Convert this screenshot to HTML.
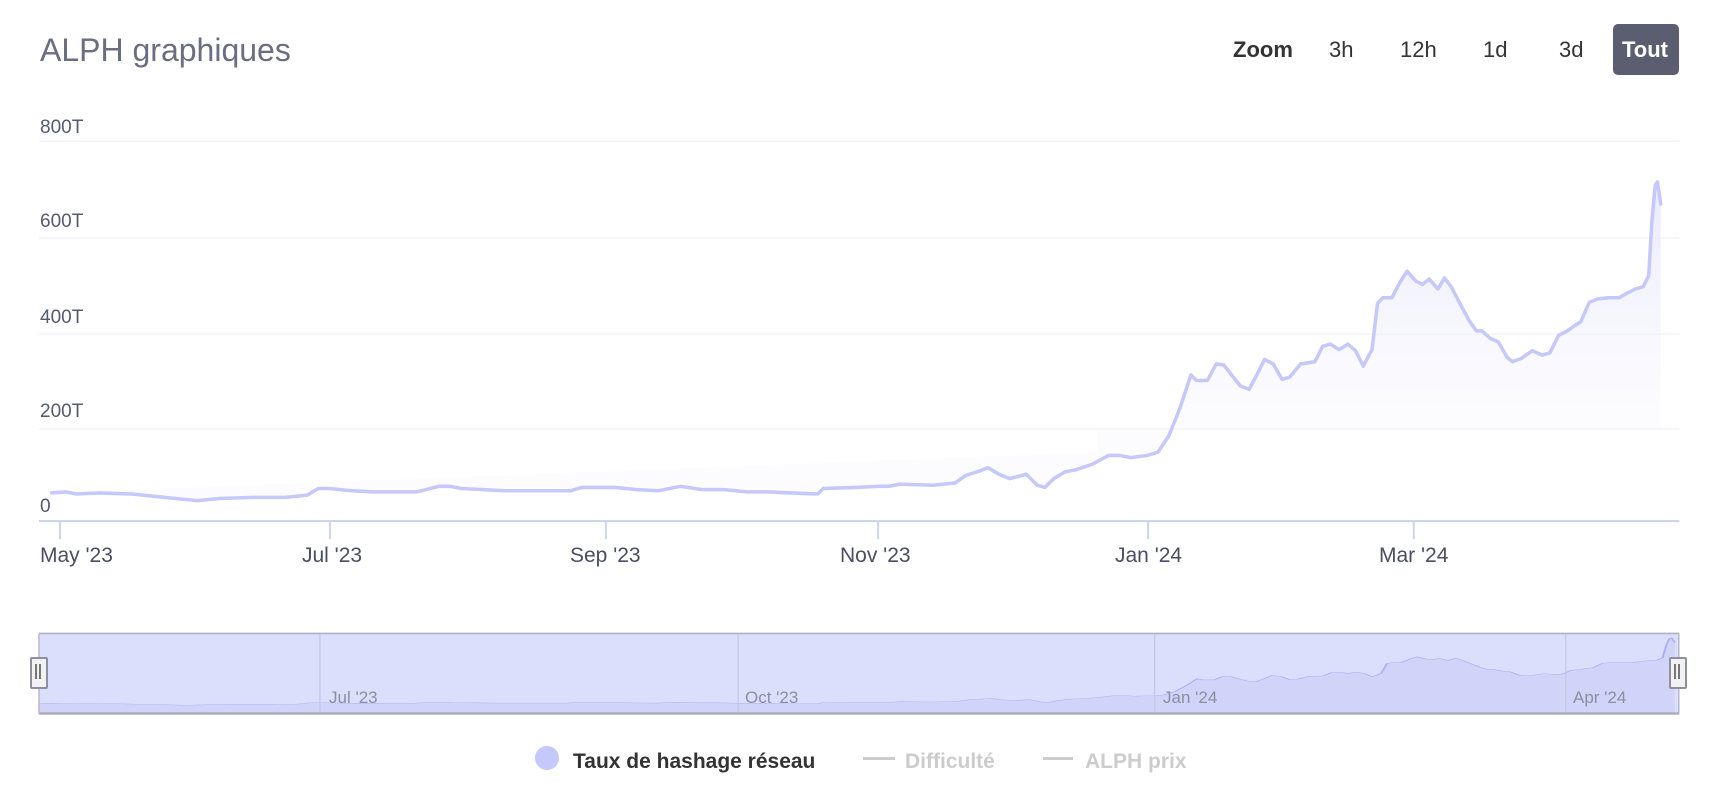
<!DOCTYPE html>
<html><head><meta charset="utf-8"><style>
html,body{margin:0;padding:0;background:#fff;width:1720px;height:794px;overflow:hidden;font-family:"Liberation Sans",sans-serif;}
.t{position:absolute;white-space:nowrap;line-height:1;}
.yl{font-size:19px;color:#555a6e;left:40px;}
.xl{font-size:21px;color:#4a4e60;top:545px;}
.nl{font-size:17px;color:#8b8fa0;top:689px;}
</style></head><body>
<svg width="1720" height="794" viewBox="0 0 1567 720" preserveAspectRatio="none" style="position:absolute;left:0;top:0">
<defs>
<linearGradient id="g" x1="0" y1="0" x2="0" y2="1" gradientUnits="userSpaceOnUse" x1a="0"><stop offset="0" stop-color="#c5c8fb" stop-opacity="0.35"/><stop offset="1" stop-color="#c5c8fb" stop-opacity="0"/></linearGradient>
<linearGradient id="g2" x1="0" y1="160" x2="0" y2="390" gradientUnits="userSpaceOnUse"><stop offset="0" stop-color="#e6e7fb" stop-opacity="0.9"/><stop offset="1" stop-color="#f3f3fc" stop-opacity="0.2"/></linearGradient>
</defs>
<g stroke="#f2f2f8" stroke-width="1.2">
<line x1="35.5" y1="128" x2="1530" y2="128"/><line x1="35.5" y1="216" x2="1530" y2="216"/><line x1="35.5" y1="303" x2="1530" y2="303"/><line x1="35.5" y1="389" x2="1530" y2="389"/>
</g>
<line x1="35.5" y1="472.5" x2="1530" y2="472.5" stroke="#ccd6eb" stroke-width="2"/>
<g stroke="#ccd6eb" stroke-width="1.8">
<line x1="54.7" y1="473" x2="54.7" y2="489"/><line x1="300.6" y1="473" x2="300.6" y2="489"/><line x1="552" y1="473" x2="552" y2="489"/><line x1="800" y1="473" x2="800" y2="489"/><line x1="1046" y1="473" x2="1046" y2="489"/><line x1="1288" y1="473" x2="1288" y2="489"/>
</g>
<path id="p" d="M47 447 L60 446 L70 448 L90 447 L120 448 L140 450 L160 452 L180 454 L200 452 L230 451 L260 451 L280 449 L290 443 L300 443 L320 445 L340 446 L380 446 L400 441 L410 441 L420 443 L440 444 L460 445 L520 445 L530 442 L560 442 L580 444 L600 445 L620 441 L640 444 L660 444 L680 446 L700 446 L720 447 L745 448 L750 443 L780 442 L800 441 L810 441 L820 439 L850 440 L870 438 L880 431 L890 428 L900 424 L910 430 L920 434 L935 430 L945 440 L952 442 L960 434 L970 428 L980 426 L995 421 L1010 413 L1020 413 L1030 415 L1045 413 L1055 410 L1065 395 L1075 370 L1085 340 L1090 345 L1100 345 L1108 330 L1115 331 L1122 340 L1130 350 L1138 353 L1145 340 L1152 326 L1160 330 L1168 344 L1175 342 L1185 330 L1198 328 L1205 314 L1212 312 L1220 317 L1228 312 L1235 318 L1242 332 L1250 317 L1255 275 L1260 270 L1268 270 L1276 255 L1282 246 L1290 255 L1296 258 L1302 253 L1310 262 L1316 252 L1322 260 L1330 275 L1338 290 L1345 300 L1350 300 L1358 307 L1365 310 L1373 324 L1378 328 L1386 325 L1396 318 L1405 322 L1412 320 L1420 304 L1428 300 L1435 295 L1440 292 L1448 274 L1456 271 L1465 270 L1475 270 L1482 266 L1490 262 L1497 260 L1502 250 L1505 200 L1508 168 L1510 165 L1513 185" fill="none"/>
<path d="M47 447 L60 446 L70 448 L90 447 L120 448 L140 450 L160 452 L180 454 L200 452 L230 451 L260 451 L280 449 L290 443 L300 443 L320 445 L340 446 L380 446 L400 441 L410 441 L420 443 L440 444 L460 445 L520 445 L530 442 L560 442 L580 444 L600 445 L620 441 L640 444 L660 444 L680 446 L700 446 L720 447 L745 448 L750 443 L780 442 L800 441 L810 441 L820 439 L850 440 L870 438 L880 431 L890 428 L900 424 L910 430 L920 434 L935 430 L945 440 L952 442 L960 434 L970 428 L980 426 L995 421 L1010 413 L1020 413 L1030 415 L1045 413 L1055 410 L1065 395 L1075 370 L1085 340 L1090 345 L1100 345 L1108 330 L1115 331 L1122 340 L1130 350 L1138 353 L1145 340 L1152 326 L1160 330 L1168 344 L1175 342 L1185 330 L1198 328 L1205 314 L1212 312 L1220 317 L1228 312 L1235 318 L1242 332 L1250 317 L1255 275 L1260 270 L1268 270 L1276 255 L1282 246 L1290 255 L1296 258 L1302 253 L1310 262 L1316 252 L1322 260 L1330 275 L1338 290 L1345 300 L1350 300 L1358 307 L1365 310 L1373 324 L1378 328 L1386 325 L1396 318 L1405 322 L1412 320 L1420 304 L1428 300 L1435 295 L1440 292 L1448 274 L1456 271 L1465 270 L1475 270 L1482 266 L1490 262 L1497 260 L1502 250 L1505 200 L1508 168 L1510 165 L1513 185 L1513 390 L1000 390 L1000 410 Z" fill="url(#g2)"/>
<use href="#p" stroke="#c5c8fb" stroke-width="3.2" stroke-linejoin="round" stroke-linecap="round"/>
<!-- navigator -->
<rect x="35.5" y="575" width="1494" height="72" fill="#dcdffc"/>
<g transform="matrix(1.017 0 0 0.211 -12.8 543.7)">
<path d="M47 447 L60 446 L70 448 L90 447 L120 448 L140 450 L160 452 L180 454 L200 452 L230 451 L260 451 L280 449 L290 443 L300 443 L320 445 L340 446 L380 446 L400 441 L410 441 L420 443 L440 444 L460 445 L520 445 L530 442 L560 442 L580 444 L600 445 L620 441 L640 444 L660 444 L680 446 L700 446 L720 447 L745 448 L750 443 L780 442 L800 441 L810 441 L820 439 L850 440 L870 438 L880 431 L890 428 L900 424 L910 430 L920 434 L935 430 L945 440 L952 442 L960 434 L970 428 L980 426 L995 421 L1010 413 L1020 413 L1030 415 L1045 413 L1055 410 L1065 395 L1075 370 L1085 340 L1090 345 L1100 345 L1108 330 L1115 331 L1122 340 L1130 350 L1138 353 L1145 340 L1152 326 L1160 330 L1168 344 L1175 342 L1185 330 L1198 328 L1205 314 L1212 312 L1220 317 L1228 312 L1235 318 L1242 332 L1250 317 L1255 275 L1260 270 L1268 270 L1276 255 L1282 246 L1290 255 L1296 258 L1302 253 L1310 262 L1316 252 L1322 260 L1330 275 L1338 290 L1345 300 L1350 300 L1358 307 L1365 310 L1373 324 L1378 328 L1386 325 L1396 318 L1405 322 L1412 320 L1420 304 L1428 300 L1435 295 L1440 292 L1448 274 L1456 271 L1465 270 L1475 270 L1482 266 L1490 262 L1497 260 L1502 250 L1505 200 L1508 168 L1510 165 L1513 185 L1513 490 L47 490 Z" fill="#d1d4f8"/>
<use href="#p" stroke="#a9aff6" stroke-width="1.8" vector-effect="non-scaling-stroke"/>
</g>
<g stroke="#c2c5e0" stroke-width="1"><line x1="291.5" y1="575" x2="291.5" y2="647"/><line x1="672.5" y1="575" x2="672.5" y2="647"/><line x1="1052" y1="575" x2="1052" y2="647"/><line x1="1426.5" y1="575" x2="1426.5" y2="647"/></g>
<line x1="35.5" y1="574.5" x2="1530" y2="574.5" stroke="#b0b3c8" stroke-width="1.6"/>
<line x1="35.5" y1="647" x2="1530" y2="647" stroke="#a8a8b0" stroke-width="2"/>
<line x1="35.5" y1="575" x2="35.5" y2="647" stroke="#b0b3c8" stroke-width="1.2"/>
<line x1="1529.5" y1="575" x2="1529.5" y2="647" stroke="#b0b3c8" stroke-width="1.2"/>
</svg>
<!-- handles (original coords) -->
<div style="position:absolute;left:30px;top:657px;width:14px;height:28px;background:#f2f2f2;border:2px solid #8e90a0;border-radius:2px"></div>
<div style="position:absolute;left:35px;top:664px;width:1.5px;height:15px;background:#777"></div>
<div style="position:absolute;left:39px;top:664px;width:1.5px;height:15px;background:#777"></div>
<div style="position:absolute;left:1669px;top:657px;width:14px;height:28px;background:#f2f2f2;border:2px solid #8e90a0;border-radius:2px"></div>
<div style="position:absolute;left:1674px;top:664px;width:1.5px;height:15px;background:#777"></div>
<div style="position:absolute;left:1678px;top:664px;width:1.5px;height:15px;background:#777"></div>

<div class="t" style="left:40px;top:34px;font-size:32px;color:#6b6e80">ALPH graphiques</div>
<div class="t" style="left:1233px;top:39px;font-size:22px;font-weight:bold;color:#333">Zoom</div>
<div class="t" style="left:1329px;top:39px;font-size:22px;color:#333">3h</div>
<div class="t" style="left:1400px;top:39px;font-size:22px;color:#333">12h</div>
<div class="t" style="left:1483px;top:39px;font-size:22px;color:#333">1d</div>
<div class="t" style="left:1559px;top:39px;font-size:22px;color:#333">3d</div>
<div style="position:absolute;left:1613px;top:24px;width:66px;height:51px;background:#5a5e70;border-radius:5px"></div>
<div class="t" style="left:1622px;top:39px;font-size:22px;font-weight:bold;color:#fff">Tout</div>

<div class="t yl" style="top:118px">800T</div>
<div class="t yl" style="top:212px">600T</div>
<div class="t yl" style="top:308px">400T</div>
<div class="t yl" style="top:402px">200T</div>
<div class="t yl" style="top:497px">0</div>

<div class="t xl" style="left:40px">May '23</div>
<div class="t xl" style="left:302px">Jul '23</div>
<div class="t xl" style="left:570px">Sep '23</div>
<div class="t xl" style="left:840px">Nov '23</div>
<div class="t xl" style="left:1115px">Jan '24</div>
<div class="t xl" style="left:1379px">Mar '24</div>

<div class="t nl" style="left:329px">Jul '23</div>
<div class="t nl" style="left:745px">Oct '23</div>
<div class="t nl" style="left:1163px">Jan '24</div>
<div class="t nl" style="left:1573px">Apr '24</div>

<div style="position:absolute;left:535px;top:746px;width:24px;height:24px;border-radius:50%;background:#c5c8fb"></div>
<div class="t" style="left:573px;top:751px;font-size:21px;font-weight:bold;color:#333">Taux de hashage réseau</div>
<div style="position:absolute;left:863px;top:757px;width:32px;height:3px;background:#ccc"></div>
<div class="t" style="left:905px;top:751px;font-size:21px;font-weight:bold;color:#ccc">Difficulté</div>
<div style="position:absolute;left:1043px;top:757px;width:30px;height:3px;background:#ccc"></div>
<div class="t" style="left:1085px;top:751px;font-size:21px;font-weight:bold;color:#ccc">ALPH prix</div>
</body></html>
